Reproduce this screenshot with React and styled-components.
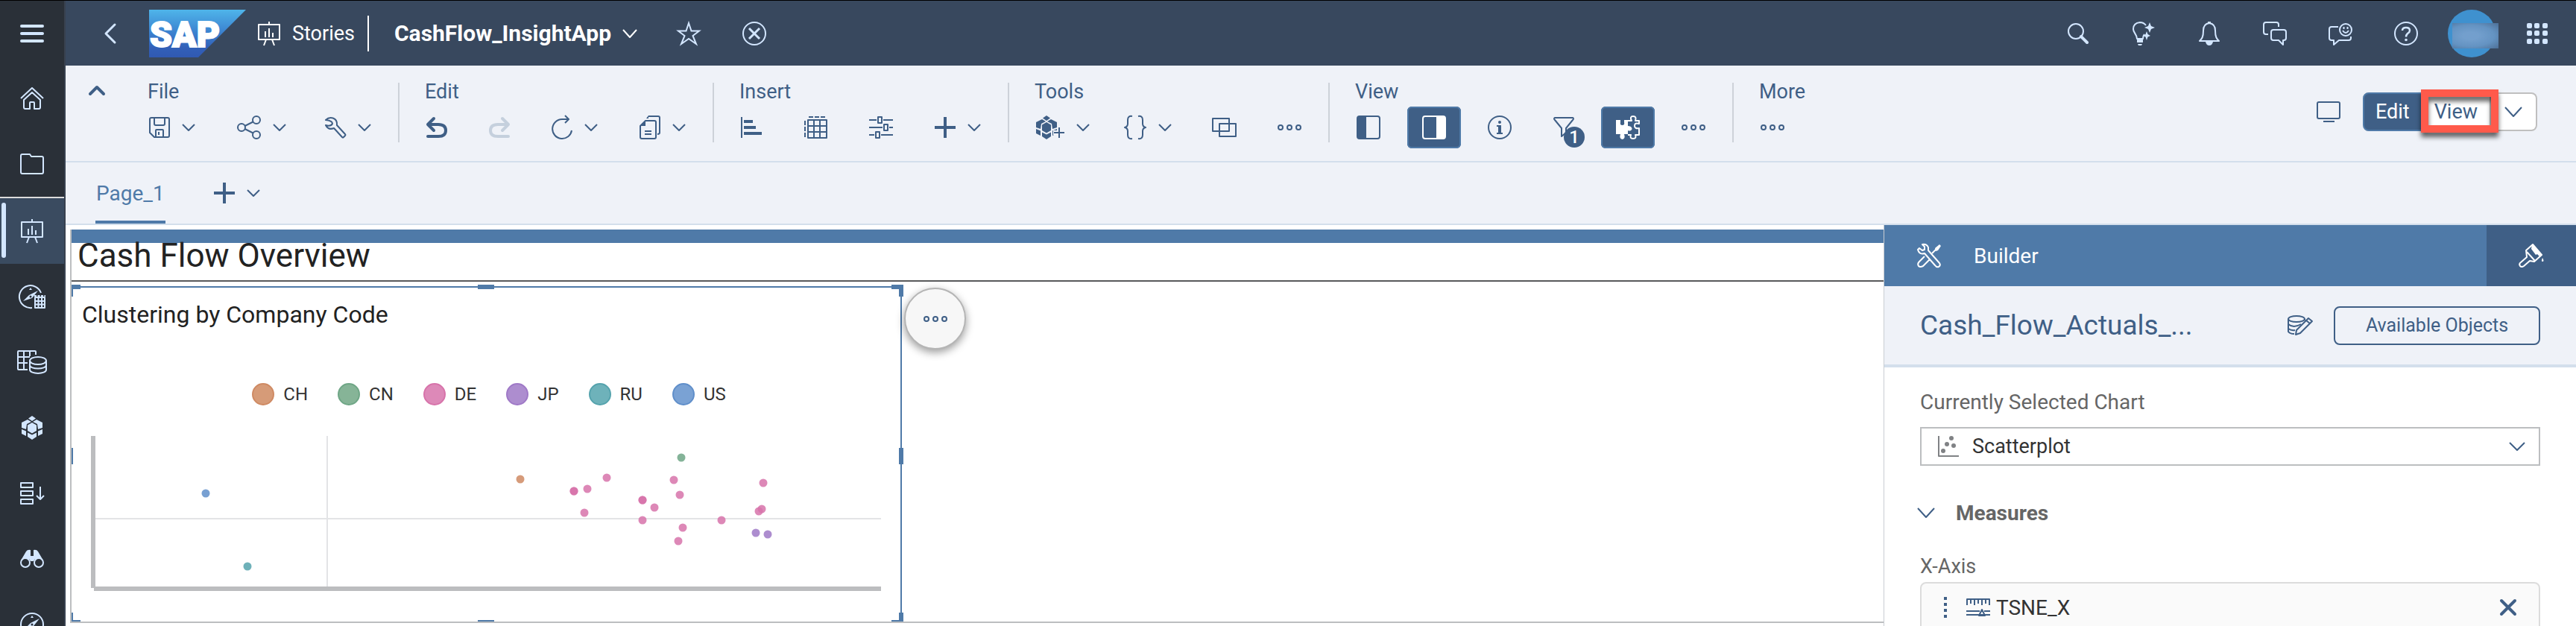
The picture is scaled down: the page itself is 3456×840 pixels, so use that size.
import React from "react";
import styled, { createGlobalStyle, css } from "styled-components";

const c = {
  ink: "#3f5f86",
  blue: "#4f7aa8",
  shell: "#38485e",
  side: "#2a3038",
  ice: "#d3e6ff",
  tint: "#eff2f8",
  line: "#d3dfec",
};

const GlobalStyle = createGlobalStyle`
  * { box-sizing: border-box; }
  body { margin: 0; font-family: Roboto, "Liberation Sans", sans-serif; overflow: hidden; }
  button, select { font: inherit; color: inherit; background: none; border: 0; padding: 0; margin: 0; }
  button { cursor: pointer; display: flex; align-items: center; }
  h1, h2, h3 { margin: 0; font-weight: 400; }
`;

/* ---------- icons ---------- */

const Svg = styled.svg`
  display: block;
  flex: none;
  overflow: visible;
  fill: none;
  stroke: currentColor;
  stroke-width: ${(p) => p.$stroke || 2};
  stroke-linecap: ${(p) => (p.$round ? "round" : "butt")};
  stroke-linejoin: round;
`;

function Icon({ w = 32, h = 32, stroke, round, children }) {
  return (
    <Svg width={w} height={h} viewBox={`0 0 ${w} ${h}`} $stroke={stroke} $round={round} aria-hidden="true">
      {children}
    </Svg>
  );
}

const solid = { fill: "currentColor", stroke: "none" };

const Chevron = ({ w = 18, h = 10, stroke = 2 }) => (
  <Icon w={w} h={h} stroke={stroke}>
    <path d={`M1 1L${w / 2} ${h - 1}L${w - 1} 1`} />
  </Icon>
);
const ChevronUp = () => (
  <Icon w={22} h={14} stroke={4} round>
    <path d="M2 12L11 3L20 12" />
  </Icon>
);
const Menu = () => (
  <Icon stroke={4} round>
    <path d="M2 6H30M2 16H30M2 26H30" />
  </Icon>
);
const Home = () => (
  <Icon>
    <path d="M1 16L16 2L31 16" />
    <path d="M5 18V28Q5 30 7 30H13V22Q13 21 14 21H18Q19 21 19 22V30H25Q27 30 27 28V18L16 8Z" />
  </Icon>
);
const Folder = () => (
  <Icon h={28}>
    <path d="M1 3Q1 1 3 1H13L15 4H29Q31 4 31 6V25Q31 27 29 27H3Q1 27 1 25Z" />
  </Icon>
);
const Board = () => (
  <Icon w={30}>
    <path d="M15 0V4M1 4H29V24H1ZM11 24L8 32M19 24L22 32M10 13V21M15 9V21M20 15V21" />
  </Icon>
);
const compassNeedle = (
  <>
    <path d="M6 22L14 14L26 8L18 18Z" {...solid} />
    <circle cx="16" cy="16" r="1.5" fill={c.side} stroke="none" />
    <path d="M14 7L16 4L18 7Z" {...solid} />
  </>
);
const CompassGrid = () => (
  <Icon w={36}>
    <path d="M30 11A15 15 0 1 0 18 31" />
    {compassNeedle}
    <path d="M22 17V31H35V17ZM26.500 17V31M31 17V31M22 22H35M22 26.500H35" />
    <path d="M21 15H36" strokeDasharray="3 1.500" />
  </Icon>
);
const Compass = () => (
  <Icon>
    <circle cx="16" cy="16" r="15" />
    {compassNeedle}
  </Icon>
);
const TableDb = () => (
  <Icon w={40}>
    <path d="M14 26H2Q1 26 1 25V2Q1 1 2 1H24Q25 1 25 2V6M9 1V26M17 1V8M1 9H17M1 17H14" />
    <ellipse cx="28" cy="14" rx="11" ry="5" />
    <path d="M17 14V26C17 32.500 39 32.500 39 26V14M17 20C17 26 39 26 39 20" />
  </Icon>
);
const Cube = () => (
  <g {...solid}>
    <path d="M14 0L19 3.500L14 7L9 3.500Z" />
    <path d="M8 5L13 8L7 11L6 18L0 16V9Z" />
    <path d="M20 5L15 8L21 11L22 18L28 16V9Z" />
    <path d="M14 9L20 12.500V20L14 23.500L8 20V12.500Z" />
    <path d="M0 18L6 20.500V27L0 24Z" />
    <path d="M28 18L22 20.500V27L28 24Z" />
    <path d="M8 22.500L14 25.500L20 22.500V28L14 32L8 28Z" />
  </g>
);
const CubeIcon = () => (
  <Icon w={28}>
    <Cube />
  </Icon>
);
const CubePlus = () => (
  <Icon w={38}>
    <Cube />
    <path d="M23 23H39M31 15V31" stroke={c.tint} strokeWidth="6" />
    <path d="M24 23H38M31 16V30" />
  </Icon>
);
const SortList = () => (
  <Icon>
    <path d="M1 2H17V8H1ZM1 13H17V19H1ZM1 24H17V30H1ZM27 7V24M22 19L27 24L32 19" />
  </Icon>
);
const Binoculars = () => (
  <Icon h={26}>
    <path d="M1 15L8 3Q10 0 14 1V9H18V1Q22 0 24 3L31 15L28 13H20L18 16H14L12 13H4Z" {...solid} />
    <circle cx="7" cy="18" r="6" />
    <circle cx="25" cy="18" r="6" />
  </Icon>
);
const Back = () => (
  <Icon w={16} h={28} stroke={3} round>
    <path d="M14 2L2 14L14 26" />
  </Icon>
);
const Star = () => (
  <Icon>
    <path d="M16 2L19.500 12.500H30L21.500 19L26 30L16 23L6 30L10.500 19L2 12.500H12.500Z" strokeLinejoin="miter" />
  </Icon>
);
const CloseCircle = () => (
  <Icon>
    <circle cx="16" cy="16" r="15" />
    <path d="M9 9L23 23M23 9L9 23" strokeWidth="3" />
  </Icon>
);
const Search = () => (
  <Icon w={28} h={28}>
    <circle cx="11" cy="11" r="10" />
    <path d="M18 18L26 26" strokeWidth="4" strokeLinecap="round" />
  </Icon>
);
const Bulb = () => (
  <Icon w={30}>
    <path d="M18 5Q15 1 10 1Q1 2 1 10C1 15 6 17 6 23H14Q14 19 16 17" />
    <path d="M6 24H14V28H6ZM7 30H13L12 32H8Z" {...solid} />
    <path d="M23 1L25 6L30 8L25 10L23 15L21 10L16 8L21 6ZM19 13L20.500 17L24 19L20.500 20.500L19 25L17.500 20.500L14 19L17.500 17Z" {...solid} />
  </Icon>
);
const Bell = () => (
  <Icon w={28}>
    <path d="M14 2Q22 3 22 12C22 21 24 23 27 26H1C4 23 6 21 6 12Q6 3 14 2Z" />
    <path d="M12 0H16V3H12ZM9 27H19Q18 32 14 32Q10 32 9 27Z" {...solid} />
  </Icon>
);
const Chat = () => (
  <Icon>
    <path d="M7 17H4Q1 17 1 14V4Q1 1 4 1H18Q21 1 21 4V7" />
    <path d="M14 11H28Q31 11 31 14V22Q31 25 28 25H27V31L21 25H14Q11 25 11 22V14Q11 11 14 11Z" />
  </Icon>
);
const Feedback = () => (
  <Icon>
    <path d="M13 7H4Q1 7 1 10V22Q1 25 4 25H7V31L14 25H27Q30 25 30 22V20" />
    <circle cx="23" cy="11" r="8" />
    <path d="M19 12Q23 18 27 12" />
    <path d="M19.500 7H21.500V10H19.500ZM24.500 7H26.500V10H24.500Z" {...solid} />
  </Icon>
);
const Help = () => (
  <Icon>
    <circle cx="16" cy="16" r="15" />
    <path d="M11 12Q11 8 16 8Q21 8 21 12Q21 14 18 16Q16 18 16 20.500" strokeWidth="2.500" />
    <circle cx="16" cy="24.500" r="1.800" {...solid} />
  </Icon>
);
const Grid = () => (
  <Icon w={28} h={28}>
    {[0, 10, 21].map((y) => [0, 10, 21].map((x) => <rect key={x + "-" + y} x={x} y={y} width="7" height="7" rx="2" {...solid} />))}
  </Icon>
);
const Save = () => (
  <Icon w={28} h={28}>
    <path d="M3 1H25Q27 1 27 3V25Q27 27 25 27H7L1 21V3Q1 1 3 1ZM7 1V9Q7 11 9 11H19Q21 11 21 9V1M9 27V18Q9 17 10 17H18Q19 17 19 18V27" />
    <path d="M13 20V24" />
  </Icon>
);
const Share = () => (
  <Icon>
    <circle cx="6" cy="16" r="5" />
    <circle cx="26" cy="6" r="5" />
    <circle cx="26" cy="26" r="5" />
    <path d="M10.500 14L21.500 8.500M10.500 18L21.500 23.500" />
  </Icon>
);
const Wrench = () => (
  <Icon w={24} h={28}>
    <path d="M-3 4C2-1 13 0 12 11L23 23Q24 24 23 25L21 27Q20 28 19 27L8 15C3 17-1 15-3 11Q4 13 6 9Q6 5-3 4Z" />
  </Icon>
);
const Undo = () => (
  <Icon w={28} h={28} stroke={4} round>
    <path d="M10 2L2 10L10 18M2 10H16Q26 10 26 18Q26 26 16 26H2" />
  </Icon>
);
const Redo = () => (
  <Icon w={28} h={28} stroke={4} round>
    <path d="M18 2L26 10L18 18M26 10H12Q2 10 2 18Q2 26 12 26H26" />
  </Icon>
);
const Refresh = () => (
  <Icon w={28}>
    <path d="M27 20A13 13 0 1 1 14 5H23M18 0L23 5L18 10" />
  </Icon>
);
const Copy = () => (
  <Icon w={28}>
    <path d="M8 7H20Q22 7 22 9V29Q22 31 20 31H3Q1 31 1 29V14Z" />
    <path d="M1 14L8 7V14ZM9 4L12 0V4Z" {...solid} />
    <path d="M12 1H25Q27 1 27 3V23Q27 25 24 25M7 21H16M7 25H16" />
  </Icon>
);
const BarList = () => (
  <Icon w={28} h={28}>
    <path d="M1 0V28" />
    <path d="M4 4H16V8H4ZM4 12H20V16H4ZM4 20H28V24H4Z" {...solid} />
  </Icon>
);
const TableAdd = () => (
  <Icon>
    <path d="M6 6H31V30H6ZM14 6V30M22 6V30M6 14H31M6 22H31" />
    <path d="M7 2H30" strokeDasharray="6 2" />
    <path d="M2 7V30" strokeDasharray="6 2" />
  </Icon>
);
const Sliders = () => (
  <Icon>
    <path d="M0 6H10M19 6H32M12 2H17V10H12ZM0 16H18M27 16H32M20 12H25V20H20ZM0 26H7M16 26H32M9 22H14V30H9Z" />
  </Icon>
);
const Plus = () => (
  <Icon w={28} h={28} stroke={4}>
    <path d="M0 14H28M14 0V28" />
  </Icon>
);
const Braces = () => (
  <Icon w={20}>
    <path d="M1 1Q-5 0-5 6V11Q-5 15-9 16Q-5 17-5 21V26Q-5 32 1 31M9 1Q15 0 15 6V11Q15 15 19 16Q15 17 15 21V26Q15 32 9 31" />
  </Icon>
);
const Overlap = () => (
  <Icon w={30} h={28}>
    <path d="M-1 2H21V19H-1ZM8 9H30V26H8Z" />
  </Icon>
);
const Dots = () => (
  <Icon h={10}>
    <circle cx="4" cy="5" r="3" />
    <circle cx="16" cy="5" r="3" />
    <circle cx="28" cy="5" r="3" />
  </Icon>
);
const PanelLeft = () => (
  <Icon>
    <rect x="1" y="1" width="30" height="30" rx="3" />
    <path d="M2 1H13V31H2Z" {...solid} />
  </Icon>
);
const PanelRight = () => (
  <Icon>
    <rect x="1" y="1" width="30" height="30" rx="3" />
    <path d="M19 1H30V31H19Z" {...solid} />
  </Icon>
);
const Info = () => (
  <Icon>
    <circle cx="16" cy="16" r="15" />
    <circle cx="16" cy="9" r="2" {...solid} />
    <path d="M12 13H18V23H20V25H12V23H14V15H12Z" {...solid} />
  </Icon>
);
const Filter = () => (
  <Icon w={28} h={28}>
    <path d="M2 1H26Q28 2 26 4L17 15V21L11 26V15L2 4Q0 2 2 1Z" />
  </Icon>
);
const Puzzle = () => (
  <Icon>
    <path d="M0 6H6V9Q5 13 8.500 13Q12 13 11 9V6H16V14Q18 14 20 15Q23 18 20 20Q18 21 16 20V25H11Q13 31 8.500 32Q4 31 6 25H0Z" {...solid} />
    <path d="M16 7H21Q18 1 23 1Q28 1 26 7H31V11Q25 9 25 14Q25 18 31 17V26H26Q28 31 23 31Q18 31 20 26H16" />
  </Icon>
);
const Monitor = () => (
  <Icon h={28}>
    <rect x="1" y="1" width="30" height="22" rx="2" />
    <path d="M9 27H24" />
  </Icon>
);
const Tools = () => (
  <Icon>
    <path d="M3 6L7 9L10 8V4L7 1Q13 0 15 5V9L30 26Q32 29 29 31Q26 32 24 29L10 13Q3 15 1 8ZM17 21L8 30Q4 32 2 30Q0 27 3 24L10 17" />
    <path d="M20 13L26 7" />
    <path d="M24 6L30 1L32 3L28 9L25 10Z" {...solid} />
  </Icon>
);
const Brush = () => (
  <Icon>
    <path d="M9 9L18 1L30 15L20 24L14 23L6 30Q3 32 1 30Q-1 27 2 25L10 18ZM10 11L21 23" />
    <path d="M17 1L31 15L27 17L24 14L22 15L16 7ZM31 19Q34 24 31 24Q29 24 31 19Z" {...solid} />
  </Icon>
);
const DbEdit = () => (
  <Icon w={34} h={26}>
    <ellipse cx="12" cy="4" rx="11" ry="4" />
    <path d="M1 4V21Q3 24 9 24M1 11Q8 17 18 11M1 17Q5 20 10 19M23 4V6" />
    <path d="M12 19L28 3L33 7L17 23L11 25ZM25 6L30 10" />
  </Icon>
);
const Scatter = () => (
  <Icon w={28} h={28}>
    <path d="M1 0V27H28" />
    {[[7, 20], [12, 11], [18, 3], [21, 13]].map(([x, y]) => <circle key={x} cx={x} cy={y} r="3" {...solid} />)}
  </Icon>
);
const DragHandle = () => (
  <Icon w={4} h={28} stroke={4}>
    <path d="M2 0V28" strokeDasharray="4 4" />
  </Icon>
);
const Ruler = () => (
  <Icon h={24}>
    <path d="M1 9V1H31V9M6 1V7M11 1V9M16 1V7M21 1V9M26 1V7M0 17H18M24 17H32M0 22H32M17 23L21 15L25 23Z" />
  </Icon>
);
const Cross = () => (
  <Icon w={22} h={22} stroke={4} round>
    <path d="M2 2L20 20M20 2L2 20" />
  </Icon>
);

/* ---------- layout ---------- */

const Shell = styled.div`
  display: flex;
  height: 100vh;
  border-top: 1px solid #000;
  overflow: hidden;
`;
const SideNav = styled.nav`
  flex: 0 0 88px;
  background: ${c.side};
  border-right: 2px solid #38414f;
  overflow: hidden;
  color: ${c.ice};
`;
const SideItem = styled.button`
  position: relative;
  width: 100%;
  height: ${(p) => (p.$first ? 87 : 88)}px;
  justify-content: center;
  ${(p) =>
    p.$active &&
    css`
      height: 90px;
      border-top: 2px solid #dcdcdc;
      background: #3a4b60;
      &::before {
        content: "";
        position: absolute;
        left: 2px;
        top: 6px;
        bottom: 8px;
        width: 6px;
        border-radius: 3px;
        background: ${c.ice};
      }
    `}
`;
const Main = styled.div`
  flex: 1;
  min-width: 0;
  display: flex;
  flex-direction: column;
`;
const Header = styled.header`
  flex: 0 0 87px;
  display: flex;
  align-items: center;
  background: ${c.shell};
  color: ${c.ice};
  padding: 0 8px 0 52px;
`;
const Logo = styled.svg`
  margin: 0 16px 0 44px;
`;
const Crumb = styled.a`
  display: flex;
  align-items: center;
  gap: 16px;
  color: #fff;
  font-size: 27px;
  text-decoration: none;
  padding-right: 17px;
`;
const AppTitle = styled.button`
  border-left: 2px solid #fff;
  height: 48px;
  padding-left: 34px;
  gap: 15px;
  color: #fff;
  font-size: 30px;
  font-weight: 700;
`;
const HeadAction = styled.button`
  margin-left: ${(p) => (p.$wide ? 56 : 53)}px;
`;
const HeadTools = styled.div`
  margin-left: auto;
  display: flex;
`;
const HeadTool = styled.button`
  width: 88px;
  height: 64px;
  justify-content: center;
`;
const Avatar = styled.span`
  position: relative;
  width: 64px;
  height: 64px;
  border-radius: 50%;
  background: #3f91cf;
  &::after {
    content: "";
    position: absolute;
    left: 6px;
    top: 18px;
    width: 62px;
    height: 34px;
    background: radial-gradient(ellipse at 40% 50%, #739fcd 20%, #6493c2 60%, #4d6f96 100%);
  }
`;
const Toolbar = styled.div`
  flex: none;
  display: flex;
  align-items: flex-start;
  background: ${c.tint};
  border-bottom: 2px solid ${c.line};
  color: ${c.ink};
`;
const Collapse = styled.button`
  width: 76px;
  padding: 26px 0 0 31px;
`;
const Group = styled.section`
  position: relative;
  padding: 19px 16px 17px;
  & + &::before {
    content: "";
    position: absolute;
    left: -2px;
    top: 23px;
    width: 2px;
    height: 80px;
    background: #cdd2d9;
  }
  & + & {
    margin-left: 2px;
  }
`;
const GroupLabel = styled.h2`
  font-size: 27px;
  line-height: 32px;
  padding-left: 18px;
  margin-bottom: 4px;
`;
const Row = styled.div`
  display: flex;
  gap: 16px;
`;
const Tool = styled.button`
  position: relative;
  height: 56px;
  padding: 0 20px;
  gap: 16px;
  border-radius: 6px;
  &:disabled {
    color: #c5d0dd;
  }
  ${(p) =>
    p.$on &&
    css`
      background: ${c.ink};
      color: #fff;
      box-shadow: inset 0 0 0 2px ${c.blue};
    `}
`;
const Badge = styled.span`
  position: absolute;
  right: 6px;
  bottom: 1px;
  width: 28px;
  height: 28px;
  border-radius: 50%;
  background: ${c.ink};
  color: #fff;
  font-size: 24px;
  font-weight: 500;
  line-height: 28px;
`;
const ModeBar = styled.div`
  margin-left: auto;
  padding: 36px 52px 0 0;
  display: flex;
  align-items: center;
`;
const Segment = styled.div`
  display: flex;
  margin-left: 30px;
  height: 52px;
  border: 2px solid #bfbfbf;
  border-left: 0;
  border-radius: 8px;
  background: #fff;
`;
const Mode = styled.button`
  position: relative;
  padding: 0 16px;
  font-size: 27px;
  ${(p) =>
    p.$on &&
    css`
      padding: 0 15px;
      margin: -2px 0;
      background: ${c.ink};
      color: #fff;
      border: 2px solid ${c.blue};
      border-radius: 8px 0 0 8px;
    `}
  ${(p) =>
    p.$menu &&
    css`
      padding: 0 18px;
      border-left: 2px solid #bfbfbf;
    `}
`;
const Callout = styled.span`
  position: absolute;
  inset: -6px -12px -4px -2px;
  border: 10px solid #ff5a4b;
  filter: drop-shadow(0 6px 3px rgba(0, 0, 0, 0.6));
  pointer-events: none;
  z-index: 1;
`;
const TabBar = styled.div`
  flex: 0 0 84px;
  display: flex;
  gap: 65px;
  padding-left: 40px;
  background: ${c.tint};
  border-bottom: 2px solid ${c.line};
  color: ${c.ink};
`;
const Tab = styled.button`
  padding: 0 1px;
  font-size: 28px;
  color: ${c.blue};
  border-top: 4px solid transparent;
  border-bottom: 4px solid ${c.blue};
`;
const AddPage = styled.button`
  gap: 16px;
`;
const Work = styled.div`
  flex: 1;
  min-height: 0;
  display: flex;
`;
const Canvas = styled.main`
  flex: 1;
  min-width: 0;
  display: flex;
  padding: 6px 0 4px 6px;
  background: #fff;
`;
const Page = styled.div`
  flex: 1;
  display: flex;
  flex-direction: column;
  border: 2px solid #bcbec0;
  border-width: 0 0 2px 2px;
`;
const PageHead = styled.header`
  border-top: 18px solid ${c.blue};
  border-bottom: 2px solid #58595b;
  padding: 0 8px 16px;
`;
const PageTitle = styled.h1`
  font-size: 44px;
  line-height: 34px;
  color: #222;
`;
const Tiles = styled.div`
  flex: 1;
  min-height: 0;
  display: grid;
  grid-template-columns: 1114fr 1317fr;
  padding-top: 6px;
`;
const Tile = styled.section`
  position: relative;
  border-top: 2px solid ${c.blue};
  border-right: 2px solid ${c.blue};
`;
const TileTitle = styled.h2`
  font-size: 32px;
  line-height: 40px;
  padding: 16px 14px 0;
  color: #222;
`;
const Legend = styled.ul`
  list-style: none;
  display: flex;
  justify-content: center;
  gap: 40px;
  margin: 71px 0 40px;
  padding: 0 0 0 8px;
`;
const LegendItem = styled.li`
  display: flex;
  align-items: center;
  gap: 12px;
  font-size: 24px;
  line-height: 32px;
  color: #333;
  &::before {
    content: "";
    width: 26px;
    height: 26px;
    border-radius: 50%;
    border: 2px solid ${(p) => p.$edge};
    background: ${(p) => p.$fill};
  }
`;
const Plot = styled.svg`
  display: block;
  width: 100%;
`;
const Handle = styled.i`
  position: absolute;
  background: ${c.blue};
  ${(p) => p.$at}
`;
const MoreBubble = styled.button`
  position: absolute;
  left: calc(100% + 5px);
  top: 0;
  width: 83px;
  height: 83px;
  justify-content: center;
  border: 2px solid #b5b5b5;
  border-radius: 50%;
  background: #f7f7f7;
  color: ${c.ink};
  box-shadow: 0 4px 12px rgba(0, 0, 0, 0.4);
`;
const Panel = styled.aside`
  flex: 0 0 929px;
  border-left: 1px solid #c9cdd2;
  background: #fff;
  overflow: hidden;
`;
const PanelTabs = styled.div`
  display: flex;
  height: 82px;
  background: ${c.blue};
  color: #fff;
`;
const PanelTab = styled.button`
  font-size: 28px;
  gap: 44px;
  padding-left: 44px;
  flex: 1;
  ${(p) =>
    p.$dark &&
    css`
      flex: 0 0 120px;
      background: ${c.ink};
    `}
`;
const ModelBar = styled.div`
  display: flex;
  align-items: center;
  height: 109px;
  padding: 0 48px;
  gap: 28px;
  background: ${c.tint};
  border-bottom: 4px solid ${c.line};
  color: ${c.ink};
`;
const ModelName = styled.h2`
  flex: 1;
  font-size: 37px;
`;
const Outline = styled.button`
  width: 277px;
  height: 52px;
  justify-content: center;
  border: 2px solid ${c.ink};
  border-radius: 8px;
  font-size: 25px;
`;
const PanelBody = styled.div`
  padding: 31px 48px 0;
`;
const Label = styled.label`
  display: block;
  font-size: ${(p) => (p.$axis ? 27 : 28)}px;
  line-height: 32px;
  color: #666;
`;
const SelectBox = styled.div`
  display: flex;
  align-items: center;
  height: 52px;
  margin: 17px 0 47px;
  padding: 0 18px 0 22px;
  border: 2px solid #bcbec0;
  color: #808285;
`;
const Select = styled.select`
  flex: 1;
  height: 100%;
  appearance: none;
  outline: 0;
  margin-left: 18px;
  font-size: 27px;
  color: #333;
`;
const Tinted = styled.span`
  color: ${c.ink};
`;
const Disclosure = styled.button`
  margin: 0 0 40px -4px;
  gap: 28px;
  height: 32px;
  font-size: 28px;
  font-weight: 700;
  color: #666;
`;
const Card = styled.div`
  display: flex;
  align-items: center;
  height: 68px;
  margin-top: 5px;
  padding: 0 30px;
  border: 2px solid #dcdcdc;
  border-radius: 8px;
  background: #fafafa;
  color: ${c.ink};
`;
const CardText = styled.span`
  flex: 1;
  display: flex;
  align-items: center;
  gap: 8px;
  margin-left: 26px;
  font-size: 28px;
`;
const Value = styled.span`
  color: #333;
`;

/* ---------- data ---------- */

const sideItems = [
  ["Menu", Menu], ["Home", Home], ["Files", Folder], ["Stories", Board], ["Analytic Applications", CompassGrid],
  ["Datasets", TableDb], ["Modeler", CubeIcon], ["Data Actions", SortList], ["Data Analyzer", Binoculars], ["Digital Boardroom", Compass],
];
const headTools = [
  ["Search", Search], ["Insights", Bulb], ["Notifications", Bell], ["Discussions", Chat], ["Feedback", Feedback], ["Help", Help],
];
const groups = [
  { name: "File", tools: [{ n: "Save", i: Save, menu: true }, { n: "Share", i: Share, menu: true }, { n: "Settings", i: Wrench, menu: true }] },
  { name: "Edit", tools: [{ n: "Undo", i: Undo }, { n: "Redo", i: Redo, off: true }, { n: "Refresh", i: Refresh, menu: true }, { n: "Copy", i: Copy, menu: true }] },
  { name: "Insert", tools: [{ n: "Chart", i: BarList }, { n: "Table", i: TableAdd }, { n: "Input control", i: Sliders }, { n: "Add", i: Plus, menu: true }] },
  { name: "Tools", tools: [{ n: "Add data", i: CubePlus, menu: true }, { n: "Script", i: Braces, menu: true }, { n: "Linked analysis", i: Overlap }, { n: "More tools", i: Dots }] },
  {
    name: "View",
    tools: [
      { n: "Left panel", i: PanelLeft }, { n: "Right panel", i: PanelRight, on: true }, { n: "Information", i: Info },
      { n: "Filters", i: Filter, badge: "1" }, { n: "Components", i: Puzzle, on: true }, { n: "More views", i: Dots },
    ],
  },
  { name: "More", tools: [{ n: "More", i: Dots }] },
];

const series = {
  CH: ["#d69b78", "#cf8a63", [[698, 643]]],
  CN: ["#86b497", "#6fa686", [[914, 614]]],
  DE: ["#dd89b8", "#d773aa", [
    [770, 659], [770, 659], [788, 656], [814, 641], [784, 688], [862, 671], [862, 671], [878, 681], [862, 698], [904, 644],
    [912, 664], [916, 708], [910, 726], [968, 698], [1024, 648], [1022, 683], [1018, 686],
  ]],
  JP: ["#ad8dcf", "#9f79c7", [[1014, 715], [1030, 717]]],
  RU: ["#6eb2ba", "#55a3ad", [[332, 760]]],
  US: ["#7aa2d4", "#608fca", [[276, 662]]],
};

const handles = [
  "left:0;top:-4px;width:12px;height:6px;", "left:0;top:-4px;width:2px;height:16px;",
  "left:49%;top:-4px;width:22px;height:6px;", "right:-4px;top:-4px;width:16px;height:6px;",
  "right:-4px;top:-4px;width:6px;height:16px;", "left:0;top:48%;width:2px;height:22px;",
  "right:-4px;top:48%;width:6px;height:22px;", "left:0;bottom:0;width:12px;height:2px;",
  "left:0;bottom:0;width:2px;height:12px;", "left:49%;bottom:0;width:22px;height:2px;",
  "right:-4px;bottom:0;width:16px;height:2px;", "right:-4px;bottom:0;width:6px;height:12px;",
];

/* ---------- app ---------- */

function SapLogo() {
  return (
    <Logo width="130" height="64" viewBox="0 0 130 64" role="img" aria-label="SAP">
      <defs>
        <linearGradient id="sap" x1="0" y1="0" x2="0" y2="1">
          <stop offset="0" stopColor="#4fb5ea" />
          <stop offset="0.500" stopColor="#3a7fce" />
          <stop offset="0.800" stopColor="#3260b8" />
          <stop offset="1" stopColor="#3059b2" />
        </linearGradient>
      </defs>
      <path d="M0 0H130L66 64H0Z" fill="url(#sap)" />
      <text x="1" y="50" fontSize="48" fontWeight="900" fill="#fff" stroke="#fff" strokeWidth="2">SAP</text>
    </Logo>
  );
}

function ScatterChart() {
  return (
    <Plot viewBox="0 0 1112 208" role="img" aria-label="Scatterplot of clusters by company code">
      <path d="M343 0V202M32 111H1086" stroke="#e3e4e6" strokeWidth="2" />
      <path d="M29 0V204" stroke="#bcbdbf" strokeWidth="6" />
      <path d="M30 205H1086" stroke="#bcbdbf" strokeWidth="6" />
      {Object.entries(series).map(([name, [, edge, points]]) =>
        points.map(([x, y], i) => <circle key={name + i} cx={x - 96} cy={y - 585} r="5.500" fill={edge} opacity="0.850" />)
      )}
    </Plot>
  );
}

export default function App() {
  return (
    <>
      <GlobalStyle />
      <Shell>
        <SideNav aria-label="Main">
          {sideItems.map(([name, Pic], i) => (
            <SideItem key={name} aria-label={name} $first={i === 0} $active={i === 3}>
              <Pic />
            </SideItem>
          ))}
        </SideNav>
        <Main>
          <Header>
            <button aria-label="Back"><Back /></button>
            <SapLogo />
            <Crumb href="#stories"><Board />Stories</Crumb>
            <AppTitle>CashFlow_InsightApp<Chevron w={20} h={12} /></AppTitle>
            <HeadAction aria-label="Favorite"><Star /></HeadAction>
            <HeadAction aria-label="Close" $wide><CloseCircle /></HeadAction>
            <HeadTools>
              {headTools.map(([name, Pic]) => (
                <HeadTool key={name} aria-label={name}><Pic /></HeadTool>
              ))}
              <HeadTool aria-label="Profile"><Avatar /></HeadTool>
              <HeadTool aria-label="Product switch"><Grid /></HeadTool>
            </HeadTools>
          </Header>

          <Toolbar>
            <Collapse aria-label="Collapse toolbar"><ChevronUp /></Collapse>
            {groups.map((g) => (
              <Group key={g.name}>
                <GroupLabel>{g.name}</GroupLabel>
                <Row>
                  {g.tools.map(({ n, i: Pic, menu, off, on, badge }) => (
                    <Tool key={n} aria-label={n} disabled={off} $on={on}>
                      <Pic />
                      {menu && <Chevron />}
                      {badge && <Badge>{badge}</Badge>}
                    </Tool>
                  ))}
                </Row>
              </Group>
            ))}
            <ModeBar>
              <button aria-label="Device preview"><Monitor /></button>
              <Segment>
                <Mode $on>Edit</Mode>
                <Mode>View<Callout /></Mode>
                <Mode $menu aria-label="View options"><Chevron w={24} h={14} /></Mode>
              </Segment>
            </ModeBar>
          </Toolbar>

          <TabBar>
            <Tab>Page_1</Tab>
            <AddPage aria-label="Add page"><Plus /><Chevron /></AddPage>
          </TabBar>

          <Work>
            <Canvas>
              <Page>
                <PageHead><PageTitle>Cash Flow Overview</PageTitle></PageHead>
                <Tiles>
                  <Tile>
                    <TileTitle>Clustering by Company Code</TileTitle>
                    <Legend>
                      {Object.entries(series).map(([name, [fill, edge]]) => (
                        <LegendItem key={name} $fill={fill} $edge={edge}>{name}</LegendItem>
                      ))}
                    </Legend>
                    <ScatterChart />
                    {handles.map((at) => <Handle key={at} $at={at} />)}
                    <MoreBubble aria-label="More actions"><Dots /></MoreBubble>
                  </Tile>
                </Tiles>
              </Page>
            </Canvas>

            <Panel>
              <PanelTabs>
                <PanelTab><Tools />Builder</PanelTab>
                <PanelTab $dark aria-label="Styling"><Brush /></PanelTab>
              </PanelTabs>
              <ModelBar>
                <ModelName>Cash_Flow_Actuals_...</ModelName>
                <button aria-label="Change model"><DbEdit /></button>
                <Outline>Available Objects</Outline>
              </ModelBar>
              <PanelBody>
                <Label htmlFor="chart-type">Currently Selected Chart</Label>
                <SelectBox>
                  <Scatter />
                  <Select id="chart-type" defaultValue="Scatterplot">
                    <option>Scatterplot</option>
                  </Select>
                  <Tinted><Chevron w={22} h={12} /></Tinted>
                </SelectBox>
                <Disclosure><Tinted><Chevron w={24} h={14} /></Tinted>Measures</Disclosure>
                <Label as="h3" $axis>X-Axis</Label>
                <Card>
                  <DragHandle />
                  <CardText><Ruler /><Value>TSNE_X</Value></CardText>
                  <button aria-label="Remove TSNE_X"><Cross /></button>
                </Card>
              </PanelBody>
            </Panel>
          </Work>
        </Main>
      </Shell>
    </>
  );
}
